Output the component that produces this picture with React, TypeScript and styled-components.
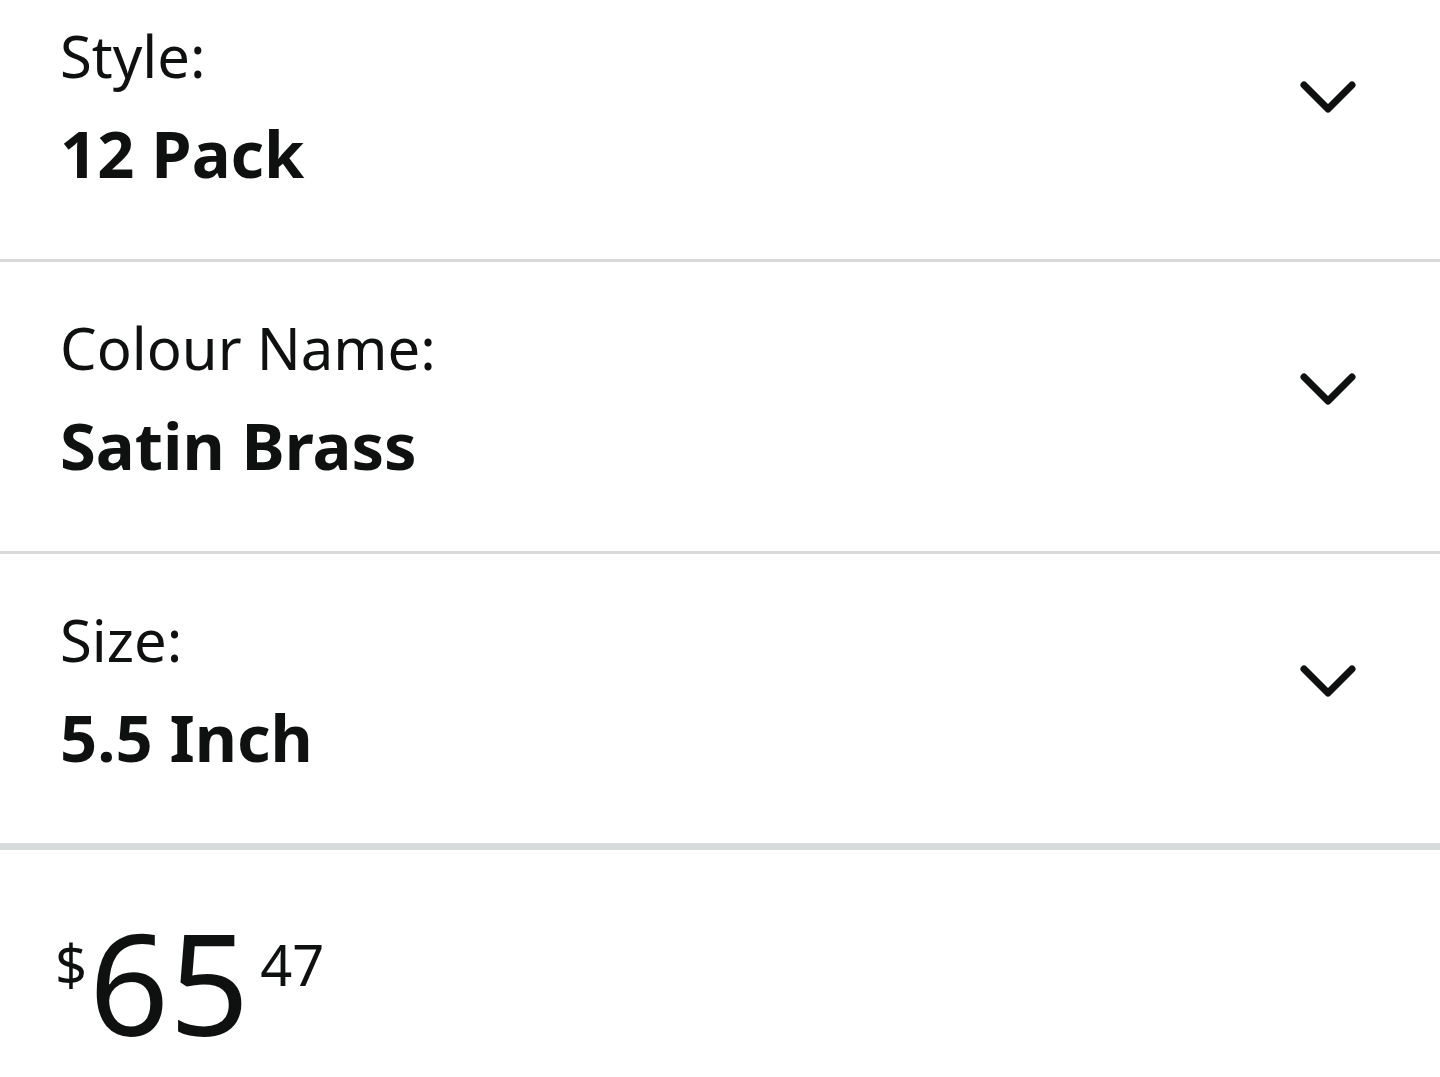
import React from 'react';
import styled, {createGlobalStyle} from 'styled-components';

const GlobalStyle = createGlobalStyle`
  html, body {
    margin: 0;
    padding: 0;
    background: #fff;
    color: #0f1111;
    font-family: "Noto Sans", "Open Sans", sans-serif;
    overflow: hidden;
  }
`;

const options = [
  {label: 'Style:', value: '12 Pack'},
  {label: 'Colour Name:', value: 'Satin Brass'},
  {label: 'Size:', value: '5.5 Inch'},
];

const Chevron = () => (
  <svg width="58" height="38" viewBox="0 0 58 38" fill="none">
    <path d="M5 6 L29 30 L53 6" stroke="#0f1111" strokeWidth="7" strokeLinecap="round" strokeLinejoin="round"/>
  </svg>
);

const App = () => (
  <Page>
    <GlobalStyle/>
    <OptionList>
      {options.map(o => (
        <OptionRow key={o.label}>
          <OptionText>
            <OptionLabel>{o.label}</OptionLabel>
            <OptionValue>{o.value}</OptionValue>
          </OptionText>
          <ChevronWrap>
            <Chevron/>
          </ChevronWrap>
        </OptionRow>
      ))}
    </OptionList>
    <PriceBlock>
      <PriceSmall>$</PriceSmall>
      <PriceWhole>65</PriceWhole>
      <PriceSmall>47</PriceSmall>
    </PriceBlock>
  </Page>
);

export default App;

const Page = styled.div`
  width: 1440px;
`;

const OptionList = styled.div`
  margin-top: -30px;
  border-bottom: 7px solid #d5dbdb;
`;

const OptionRow = styled.div`
  display: flex;
  align-items: flex-start;
  justify-content: space-between;
  padding: 50px 83px 0 60px;
  box-sizing: content-box;
  height: 239px;
  border-bottom: 3px solid #d9d9d9;

  &:last-child {
    border-bottom: none;
  }
`;

const OptionText = styled.div`
  display: flex;
  flex-direction: column;
  gap: 22px;
`;

const ChevronWrap = styled.div`
  display: flex;
  margin-top: 59px;
`;

const OptionLabel = styled.span`
  font-size: 58px;
  line-height: 72px;
  font-weight: 400;
`;

const OptionValue = styled.span`
  font-size: 65px;
  line-height: 79px;
  font-weight: 700;
`;

const PriceBlock = styled.div`
  display: flex;
  align-items: flex-start;
  padding: 56px 0 0 55px;
`;

const PriceSmall = styled.span`
  font-size: 56px;
  line-height: 1;
  margin-top: 30px;
`;

const PriceWhole = styled.span`
  font-size: 140px;
  line-height: 1.08;
  margin: 0 11px 0 2px;
`;
